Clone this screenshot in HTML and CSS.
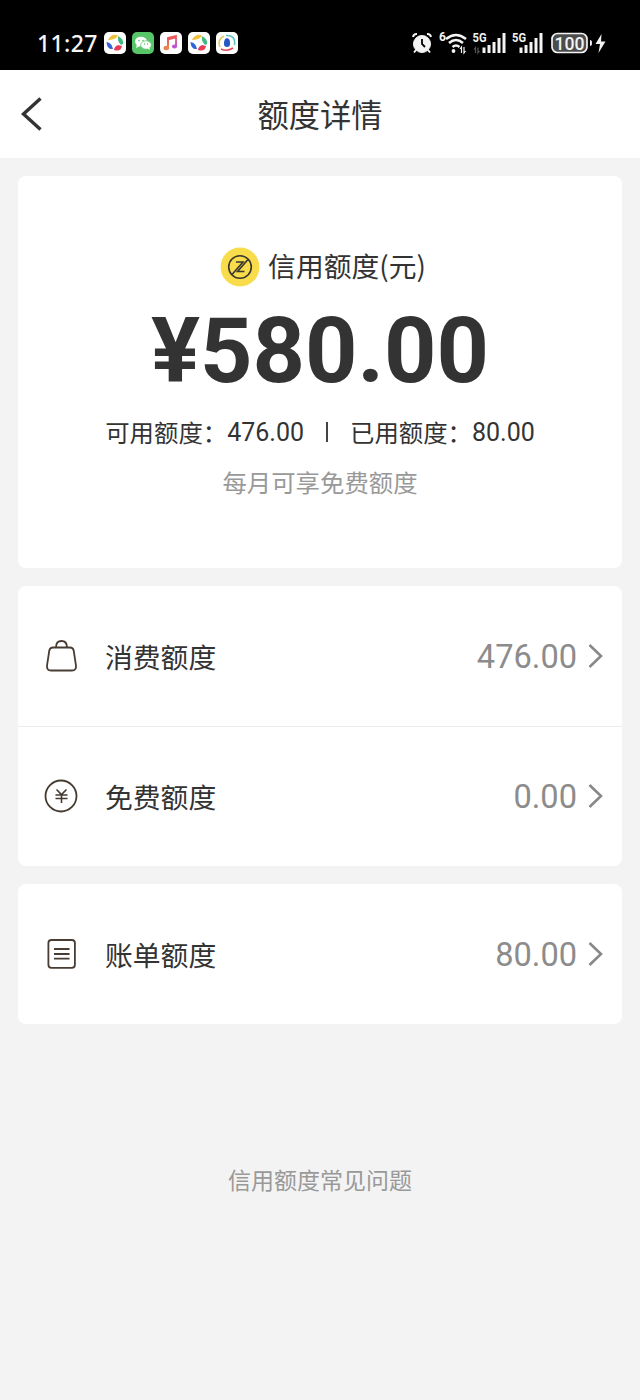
FILE: index.html
```html
<!DOCTYPE html>
<html lang="zh-CN">
<head>
<meta charset="utf-8">
<title>额度详情</title>
<link rel="stylesheet" href="styles.css">
</head>
<body>
<header class="status">
  <span class="clock">11:27</span>
  <div class="apps">
    <svg class="app" viewBox="0 0 22 22"><rect width="22" height="22" rx="5" fill="#fff"/><path d="M4 7.500Q8 1 14 3.500Q12 7.500 5 8Z" fill="#efc23b"/><path d="M14 4Q20 7 19 12L17 13Q13 9 14 4Z" fill="#42b983"/><path d="M18 14Q17 20 10 18Q10 15 14 13Z" fill="#e83b57"/><path d="M2.500 10Q8 11 9 17Q3 18 2.500 10Z" fill="#3263dc"/></svg>
    <svg class="app" viewBox="0 0 22 22"><rect width="22" height="22" rx="5" fill="#57c568"/><ellipse cx="9" cy="9.500" rx="6" ry="4.800" fill="#fff"/><path d="M5 12L4 16L8 14Z" fill="#fff"/><ellipse cx="14" cy="13" rx="5.300" ry="4.200" fill="#fff" stroke="#57c568" stroke-width=".7"/><path d="M15 16L18 18L17 14Z" fill="#fff"/><g fill="#57c568"><circle cx="7" cy="8.500" r=".8"/><circle cx="11" cy="8.500" r=".8"/><circle cx="12.500" cy="12" r=".7"/><circle cx="15.500" cy="12" r=".7"/></g></svg>
    <svg class="app" viewBox="0 0 22 22"><defs><linearGradient id="note" x2="1" y2="1"><stop stop-color="#ef5360"/><stop offset=".5" stop-color="#ee7959"/><stop offset="1" stop-color="#b44ee0"/></linearGradient></defs><rect width="22" height="22" rx="5" fill="#fff"/><path d="M8 16V6L16 4V14" fill="none" stroke="url(#note)" stroke-width="2"/><path d="M8 7L16 5" stroke="#ef5360" stroke-width="2.500"/><ellipse cx="6.300" cy="16" rx="2.800" ry="2.200" fill="#e98450"/><ellipse cx="14.500" cy="14.500" rx="2.600" ry="2.100" fill="#bd55d3"/></svg>
    <svg class="app" viewBox="0 0 22 22"><rect width="22" height="22" rx="5" fill="#fff"/><path d="M4 7.500Q8 1 14 3.500Q12 7.500 5 8Z" fill="#efc23b"/><path d="M14 4Q20 7 19 12L17 13Q13 9 14 4Z" fill="#42b983"/><path d="M18 14Q17 20 10 18Q10 15 14 13Z" fill="#e83b57"/><path d="M2.500 10Q8 11 9 17Q3 18 2.500 10Z" fill="#3263dc"/></svg>
    <svg class="app" viewBox="0 0 22 22"><rect width="22" height="22" rx="5" fill="#fff"/><g fill="none" stroke-width="1.600"><path d="M4 15Q1 8 8 4" stroke="#e6c863"/><path d="M10 3.500Q20 3 18.500 13" stroke="#65bfc1"/><path d="M5 17Q11 20 17 16" stroke="#e54a5a"/></g><path d="M11 6C8 7 8 10 8 12Q8 15 11 15Q14 15 14 12C14 9 14 7 11 6Z" fill="#2456c5"/></svg>
  </div>
  <svg class="system" viewBox="0 0 200 26">
    <g fill="#f3f3f3" stroke="#f3f3f3">
      <circle cx="12" cy="14" r="8.500"/><path d="M3 7Q3.500 3.800 7 4M17 4Q20.500 3.800 21 7M6 20L4 22.500M18 20L20 22.500" fill="none" stroke-width="2"/>
      <path d="M12 9V14L15 17" fill="none" stroke="#000" stroke-width="1.800"/>
      <g fill="none" stroke-width="2.500"><path d="M36 9Q46 1 56 9M39 13Q46 7 53 13M42.500 17Q46 14 49.500 17"/></g><circle cx="43.500" cy="21" r="1.900" stroke="none"/>
      <path d="M51.500 23V17L50 19M54 17V23L55.500 21" fill="none" stroke-width="1.200"/>
      <g stroke="none"><path d="M72.500 17.500h3V23h-3zM77.500 15h3v8h-3zM82.500 12h3v11h-3zM87.500 8h3v15h-3zM92.500 3h3v20h-3z"/><path d="M109.500 17.500h3V23h-3zM114.500 15h3v8h-3zM119.500 12h3v11h-3zM124.500 8h3v15h-3zM129.500 3h3v20h-3z"/></g>
      <path d="M65.500 23V17.500L64 19.500M68 17.500V23L69.500 21" fill="none" stroke="#555" stroke-width="1.200"/>
      <rect x="142" y="3.500" width="35" height="19" rx="5.500" fill="#4c4c4c" stroke-width="1.700"/><path d="M180 10Q182 10 182 13Q182 16 180 16Z" stroke="none"/><path d="M191.500 4L185.500 14H190L188.500 23L195.500 11.500H191Z" stroke="none"/>
    </g>
    <g class="system-text"><text x="29" y="11" font-size="12">6</text><text x="62.500" y="12" font-size="13" textLength="14" lengthAdjust="spacingAndGlyphs">5G</text><text x="102" y="12" font-size="13" textLength="14" lengthAdjust="spacingAndGlyphs">5G</text><text x="144.500" y="19.500" font-size="18.500" font-weight="500" textLength="30" lengthAdjust="spacingAndGlyphs">100</text></g>
  </svg>
</header>
<nav class="nav">
  <svg class="back" viewBox="0 0 24 36"><path d="M20.500 2.500L3.500 18L20.500 33.500" fill="none" stroke="#333" stroke-width="3.400"/></svg>
  <h1 class="title">额度详情</h1>
</nav>
<main class="content">
  <section class="card summary">
    <div class="credit">
      <svg class="coin" viewBox="0 0 40 40"><circle cx="20" cy="20" r="19.400" fill="#f8dc4b"/><g fill="none" stroke="#39362d" stroke-width="1.600"><circle cx="20" cy="20" r="11.300"/><path d="M16 15H23L12 27.500M28 12.500L17.500 24.500H24.500"/></g></svg>
      <span>信用额度(元)</span>
    </div>
    <div class="amount">¥580.00</div>
    <div class="breakdown"><span>可用额度：</span><span class="number">476.00</span><i class="separator"></i><span>已用额度：</span><span class="number">80.00</span></div>
    <p class="hint">每月可享免费额度</p>
  </section>
  <section class="card">
    <div class="row">
      <svg class="icon" viewBox="0 0 36 36"><g fill="none" stroke="#493d33" stroke-width="1.800"><path d="M10 9.500H27Q30 9.500 30.700 12.500L33 27.500Q33.500 32.500 29 32.500H8Q3.500 32.500 4 27.500L6.300 12.500Q7 9.500 10 9.500Z"/><path d="M13 9.500Q13 3 18.500 3T24 9.500"/></g></svg>
      <span class="label">消费额度</span><span class="value">476.00</span>
      <svg class="chevron" viewBox="0 0 16 26"><path d="M2.500 2L14 13L2.500 24" fill="none" stroke="#888" stroke-width="2.600"/></svg>
    </div>
    <div class="row divided">
      <svg class="icon" viewBox="0 0 36 36"><g fill="none" stroke="#443a30"><circle cx="18" cy="18" r="15.500" stroke-width="1.800"/><path d="M13.500 11.500L18.500 16.500L23.500 11.500M12.500 17H24.500M12.500 20.500H24.500M18.500 16.500V25" stroke-width="1.600"/></g></svg>
      <span class="label">免费额度</span><span class="value">0.00</span>
      <svg class="chevron" viewBox="0 0 16 26"><path d="M2.500 2L14 13L2.500 24" fill="none" stroke="#888" stroke-width="2.600"/></svg>
    </div>
  </section>
  <section class="card">
    <div class="row">
      <svg class="icon" viewBox="0 0 36 36"><g fill="none" stroke="#493d33" stroke-width="1.800"><rect x="5.400" y="4" width="26.500" height="27.800" rx="3"/><path d="M11 13H26.500M11 18H26.500M11 22.700H26.500"/></g></svg>
      <span class="label">账单额度</span><span class="value">80.00</span>
      <svg class="chevron" viewBox="0 0 16 26"><path d="M2.500 2L14 13L2.500 24" fill="none" stroke="#888" stroke-width="2.600"/></svg>
    </div>
  </section>
</main>
<footer class="faq">信用额度常见问题</footer>
</body>
</html>
```

FILE: styles.css
```css
* { box-sizing: border-box; }
body { margin: 0; min-height: 1400px; background: #f3f3f3; color: #333; font-family: "Noto Sans CJK SC", sans-serif; }
svg { display: block; flex-shrink: 0; }
.status { display: flex; align-items: center; height: 70px; padding: 16px 30px 0 37px; background: #000; color: #f5f5f5; }
.clock { width: 67px; font: 500 23px/26px "Noto Sans", sans-serif; letter-spacing: .4px; }
.apps { display: flex; gap: 6px; }
.app { width: 22px; height: 22px; }
.system { width: 200px; height: 26px; margin-left: auto; }
.system-text { fill: #f3f3f3; font-family: Roboto, sans-serif; font-weight: 700; }
.nav { display: grid; grid-template-columns: 60px 1fr 60px; align-items: center; height: 88px; background: #fff; }
.back { width: 24px; height: 36px; margin-left: 20px; }
.title { margin: 0; text-align: center; font-size: 31.3px; font-weight: 400; line-height: 44px; }
.content { display: grid; gap: 18px; padding: 18px 18px 0; }
.card { border-radius: 8px; background: #fff; }
.summary { height: 392px; padding-top: 70px; text-align: center; }
.credit { display: flex; justify-content: center; align-items: center; gap: 8px; height: 42px; padding-left: 6px; font-size: 27.8px; line-height: 40px; }
.credit span { padding-bottom: 5px; }
.coin { width: 40px; height: 40px; }
.amount { height: 120px; padding-top: 3px; font: 700 91.5px/120px Roboto, sans-serif; }
.breakdown { display: flex; justify-content: center; align-items: center; height: 48px; font-size: 24.4px; line-height: 46px; }
.number { padding-top: 2px; font-family: Roboto, sans-serif; font-size: 25px; }
.separator { width: 2px; height: 20px; margin: 0 22px; background: #444; }
.hint { margin: 0; color: #999; font-size: 24.4px; line-height: 52px; }
.row { display: flex; align-items: center; height: 140px; padding: 0 19px 0 25px; }
.divided { padding-bottom: 1px; border-top: 1px solid #ececec; }
.icon { width: 36px; height: 36px; }
.label { margin-left: 26px; font-size: 27.8px; line-height: 42px; }
.value { margin: 0 10px 0 auto; padding-top: 2px; color: #8c8c8c; font: 400 32.6px/40px Roboto, sans-serif; }
.chevron { width: 16px; height: 26px; }
.faq { margin-top: 135px; color: #999; text-align: center; font-size: 23px; line-height: 40px; }
```
